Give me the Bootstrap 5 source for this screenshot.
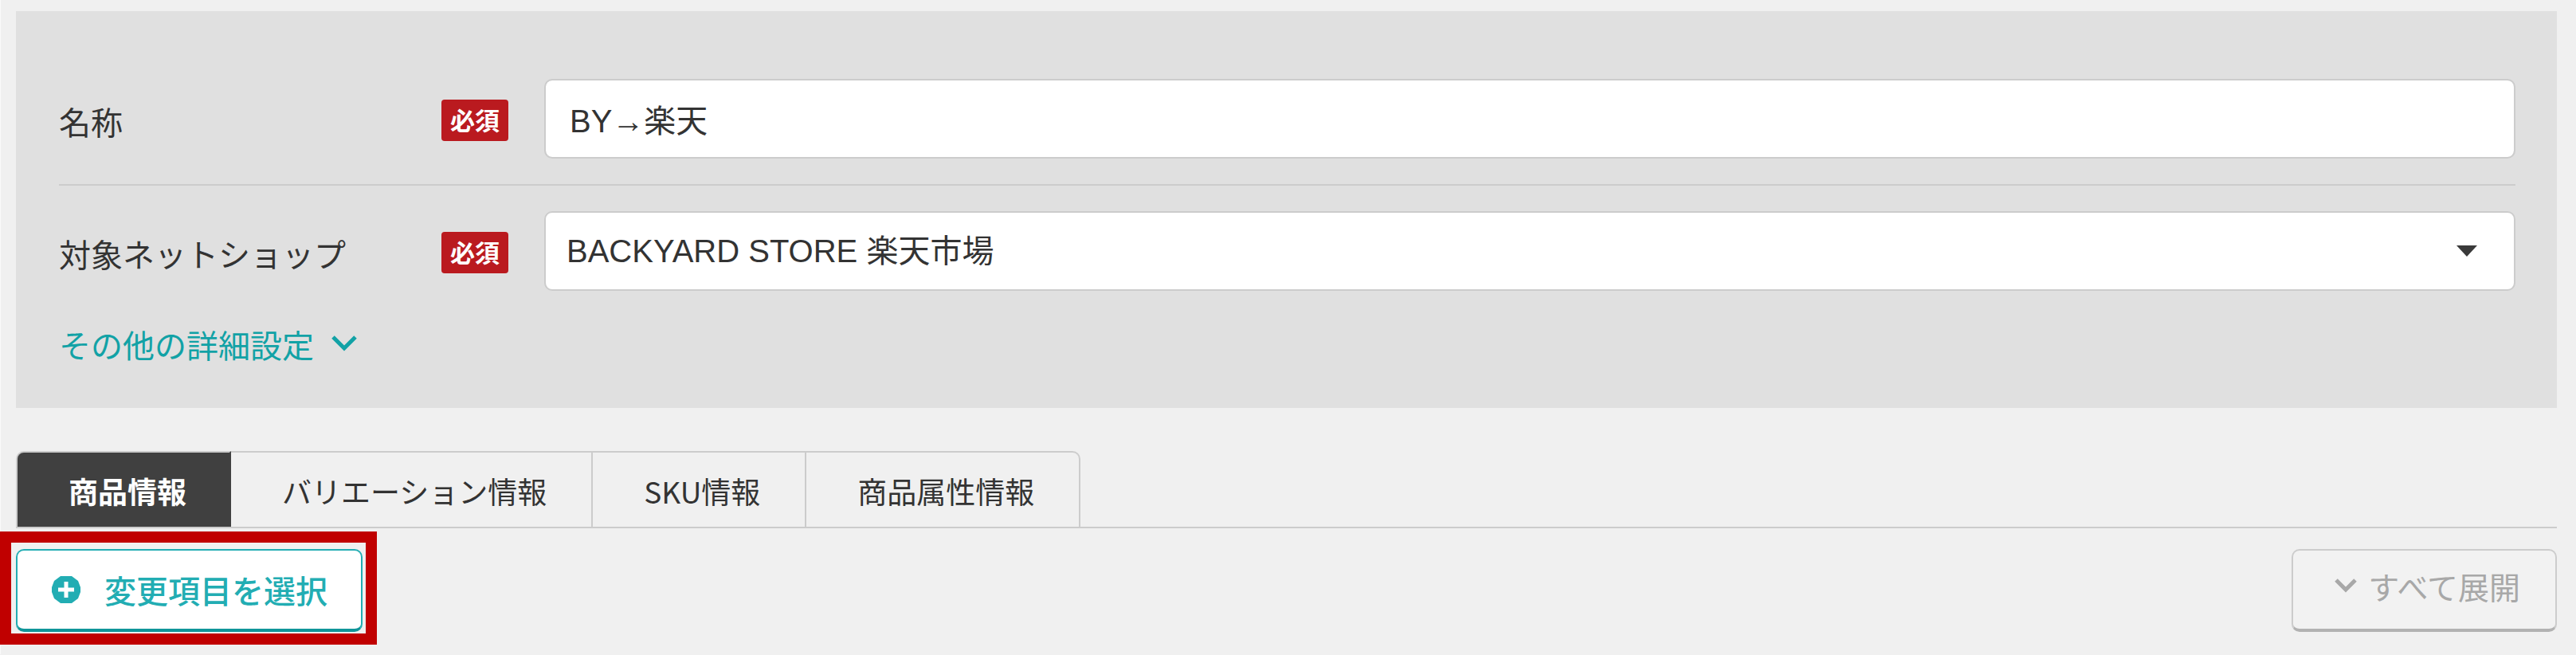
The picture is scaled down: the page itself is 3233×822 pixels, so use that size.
<!DOCTYPE html>
<html lang="ja">
<head>
<meta charset="utf-8">
<meta name="viewport" content="width=device-width, initial-scale=1">
<title>商品情報</title>
<link href="https://cdn.jsdelivr.net/npm/bootstrap@5.3.0/dist/css/bootstrap.min.css" rel="stylesheet">
<style>
body { background: #f0f0f0; color: #333; font-family: "Noto Sans CJK JP", sans-serif; font-size: 40px; line-height: 60px; }
.page { border-left: 1px solid #fafafa; padding: 14px 24px 28px 19px; }
.settings { background: #e0e0e0; padding: 85px 52px 50px 54px; margin-bottom: 54px; }
.setting-row { display: grid; grid-template-columns: 480px 129px 1fr; align-items: center; }
.setting-row + .setting-row { border-top: 2px solid #ccc; margin-top: 32px; padding-top: 32px; }
.setting-row label { padding-top: 6px; }
.required { justify-self: start; margin-top: 4px; background: #ba1a1f; font-size: 31px; line-height: 50px; padding: 0 11px 2px; border-radius: 4px; }
.field { height: 100px; border: 2px solid #ccc; border-radius: 10px; background-color: #fff; color: #333; font-family: "Liberation Sans", "Noto Sans CJK JP", sans-serif; font-size: 40px; line-height: 60px; }
input.field { padding: 16px 30px; }
select.field { padding: 16px 96px 16px 26px; background-image: url("data:image/svg+xml,%3Csvg xmlns='http://www.w3.org/2000/svg' viewBox='0 0 26 14'%3E%3Cpath fill='%233a3a3a' d='M0 0h26L13 14z'/%3E%3C/svg%3E"); background-size: 26px 14px; background-position: right 46px center; }
.more { color: #12a2a6; gap: 22px; margin-top: 37px; }
.more svg { margin-bottom: 2px; }
.tabs { border-bottom: 2px solid #ccc; margin-bottom: 26px; }
.tabs .nav-item + .nav-item .nav-link { border-left-width: 0; }
.tabs .nav-link { height: 95px; margin-bottom: 0; padding: 2px 56px 0 64px; border: 2px solid #ccc; border-bottom: 0; border-radius: 0; color: #333; font-size: 37px; }
.tabs .nav-link.active { background: #404040; color: #fff; font-weight: 700; border-color: #ccc #404040 #404040 #ccc; }
.tabs .nav-item:first-child .nav-link { padding-right: 54px; border-top-left-radius: 10px; }
.tabs .nav-item:last-child .nav-link { border-top-right-radius: 10px; }
.tool { height: 104px; font-size: 39px; line-height: 60px; border: 2px solid #ccc; border-bottom: 4px solid #b2b2b2; border-radius: 10px; }
.tool-expand, .tool-expand:disabled { background: #f2f2f2; color: #a8a8a8; border-color: #ccc #ccc #b2b2b2; opacity: 1; padding: 0 44px 10px 52px; gap: 14px; }
.tool-select { background: #fff; color: #22adb3; border-color: #22adb3 #22adb3 #109599; font-size: 40px; font-weight: 500; padding: 0 42px; gap: 29px; }
.callout-frame { position: absolute; inset: -22px -18px -16px -20px; border: 14px solid #c00000; pointer-events: none; }
</style>
</head>
<body>
<main class="page">
  <form class="settings">
    <div class="setting-row">
      <label for="name">名称</label>
      <span class="required text-white fw-bold">必須</span>
      <input id="name" class="form-control field" type="text" value="BY→楽天">
    </div>
    <div class="setting-row">
      <label for="shop">対象ネットショップ</label>
      <span class="required text-white fw-bold">必須</span>
      <select id="shop" class="form-select field"><option>BACKYARD STORE 楽天市場</option></select>
    </div>
    <a href="#" class="more d-inline-flex align-items-center text-decoration-none">その他の詳細設定
      <svg width="32" height="20" viewBox="0 0 32 20" fill="none" stroke="currentColor" stroke-width="5" aria-hidden="true"><path d="M2 2l14 14L30 2"/></svg>
    </a>
  </form>

  <ul class="nav tabs">
    <li class="nav-item"><a class="nav-link active d-flex align-items-center" href="#" aria-current="page">商品情報</a></li>
    <li class="nav-item"><a class="nav-link d-flex align-items-center" href="#">バリエーション情報</a></li>
    <li class="nav-item"><a class="nav-link d-flex align-items-center" href="#">SKU情報</a></li>
    <li class="nav-item"><a class="nav-link d-flex align-items-center" href="#">商品属性情報</a></li>
  </ul>

  <div class="d-flex justify-content-between">
    <div class="position-relative">
      <button type="button" class="btn tool tool-select d-flex align-items-center">
        <svg width="38" height="36" viewBox="0 0 38 36" aria-hidden="true"><path fill="currentColor" d="M12 1h14l8 6 3 8v6l-3 8-8 6H12l-8-6-3-8v-6l3-8z"/><path stroke="#fff" stroke-width="5" d="M9 18h20M19 8v20"/></svg>
        変更項目を選択
      </button>
      <div class="callout-frame"></div>
    </div>
    <button type="button" class="btn tool tool-expand d-flex align-items-center" disabled>
      <svg width="28" height="18" viewBox="0 0 28 18" fill="none" stroke="currentColor" stroke-width="5" aria-hidden="true"><path d="M2 2l12 12L26 2"/></svg>
      すべて展開
    </button>
  </div>
</main>
<script src="https://cdn.jsdelivr.net/npm/bootstrap@5.3.0/dist/js/bootstrap.bundle.min.js"></script>
</body>
</html>
